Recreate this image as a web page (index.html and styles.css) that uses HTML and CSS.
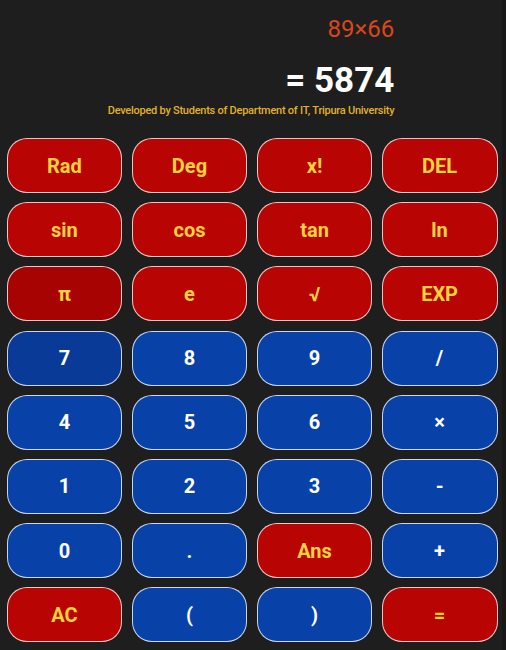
FILE: index.html
```html
<!DOCTYPE html>
<html lang="en">
<head>
<meta charset="utf-8">
<title>Calculator</title>
<link rel="stylesheet" href="styles.css">
</head>
<body>
<div class="app">
  <div class="display">
    <div class="expr">89×66</div>
    <div class="result">= 5874</div>
    <div class="credit">Developed by Students of Department of IT, Tripura University</div>
  </div>
  <div class="keys">
    <button class="key fn">Rad</button>
    <button class="key fn">Deg</button>
    <button class="key fn">x!</button>
    <button class="key fn">DEL</button>
    <button class="key fn">sin</button>
    <button class="key fn">cos</button>
    <button class="key fn">tan</button>
    <button class="key fn">ln</button>
    <button class="key fn pressed">π</button>
    <button class="key fn">e</button>
    <button class="key fn">√</button>
    <button class="key fn">EXP</button>
    <button class="key num pressed">7</button>
    <button class="key num">8</button>
    <button class="key num">9</button>
    <button class="key num">/</button>
    <button class="key num">4</button>
    <button class="key num">5</button>
    <button class="key num">6</button>
    <button class="key num">×</button>
    <button class="key num">1</button>
    <button class="key num">2</button>
    <button class="key num">3</button>
    <button class="key num">-</button>
    <button class="key num">0</button>
    <button class="key num">.</button>
    <button class="key fn">Ans</button>
    <button class="key num">+</button>
    <button class="key fn">AC</button>
    <button class="key num">(</button>
    <button class="key num">)</button>
    <button class="key fn">=</button>
  </div>
</div>
</body>
</html>
```
FILE: styles.css
```css
html, body {
  margin: 0;
  padding: 0;
  height: 100%;
}
body {
  background: #181818;
  font-family: Roboto, "Liberation Sans", sans-serif;
}
.app {
  width: 502px;
  height: 650px;
  background: #1e1e1e;
  overflow: hidden;
}
.display {
  width: fit-content;
  margin: 0 auto;
  padding-top: 15px;
  display: flex;
  flex-direction: column;
  align-items: flex-end;
}
.expr {
  font-size: 24px;
  line-height: 28px;
  color: #d9471a;
}
.result {
  margin-top: 17.5px;
  font-size: 35px;
  line-height: 40px;
  font-weight: 700;
  color: #ffffff;
}
.credit {
  margin-top: 3px;
  font-size: 11px;
  line-height: 13px;
  font-weight: 500;
  color: #e2b12a;
  letter-spacing: -0.25px;
}
.keys {
  display: grid;
  grid-template-columns: repeat(4, 1fr);
  grid-auto-rows: 55px;
  gap: 9.2px;
  padding: 0 4.5px 0 6.5px;
  margin-top: 21.5px;
}
.key {
  border: 1px solid rgba(255, 255, 255, 0.78);
  border-radius: 20px;
  font-family: Roboto, "Liberation Sans", sans-serif;
  font-size: 20px;
  font-weight: 700;
  padding: 0;
  margin: 0;
}
.fn {
  background: #b90404;
  color: #ffd23f;
}
.fn.pressed {
  background: #a70303;
}
.num {
  background: #0841a8;
  color: #ffffff;
}
.num.pressed {
  background: #0a3a98;
}
```
